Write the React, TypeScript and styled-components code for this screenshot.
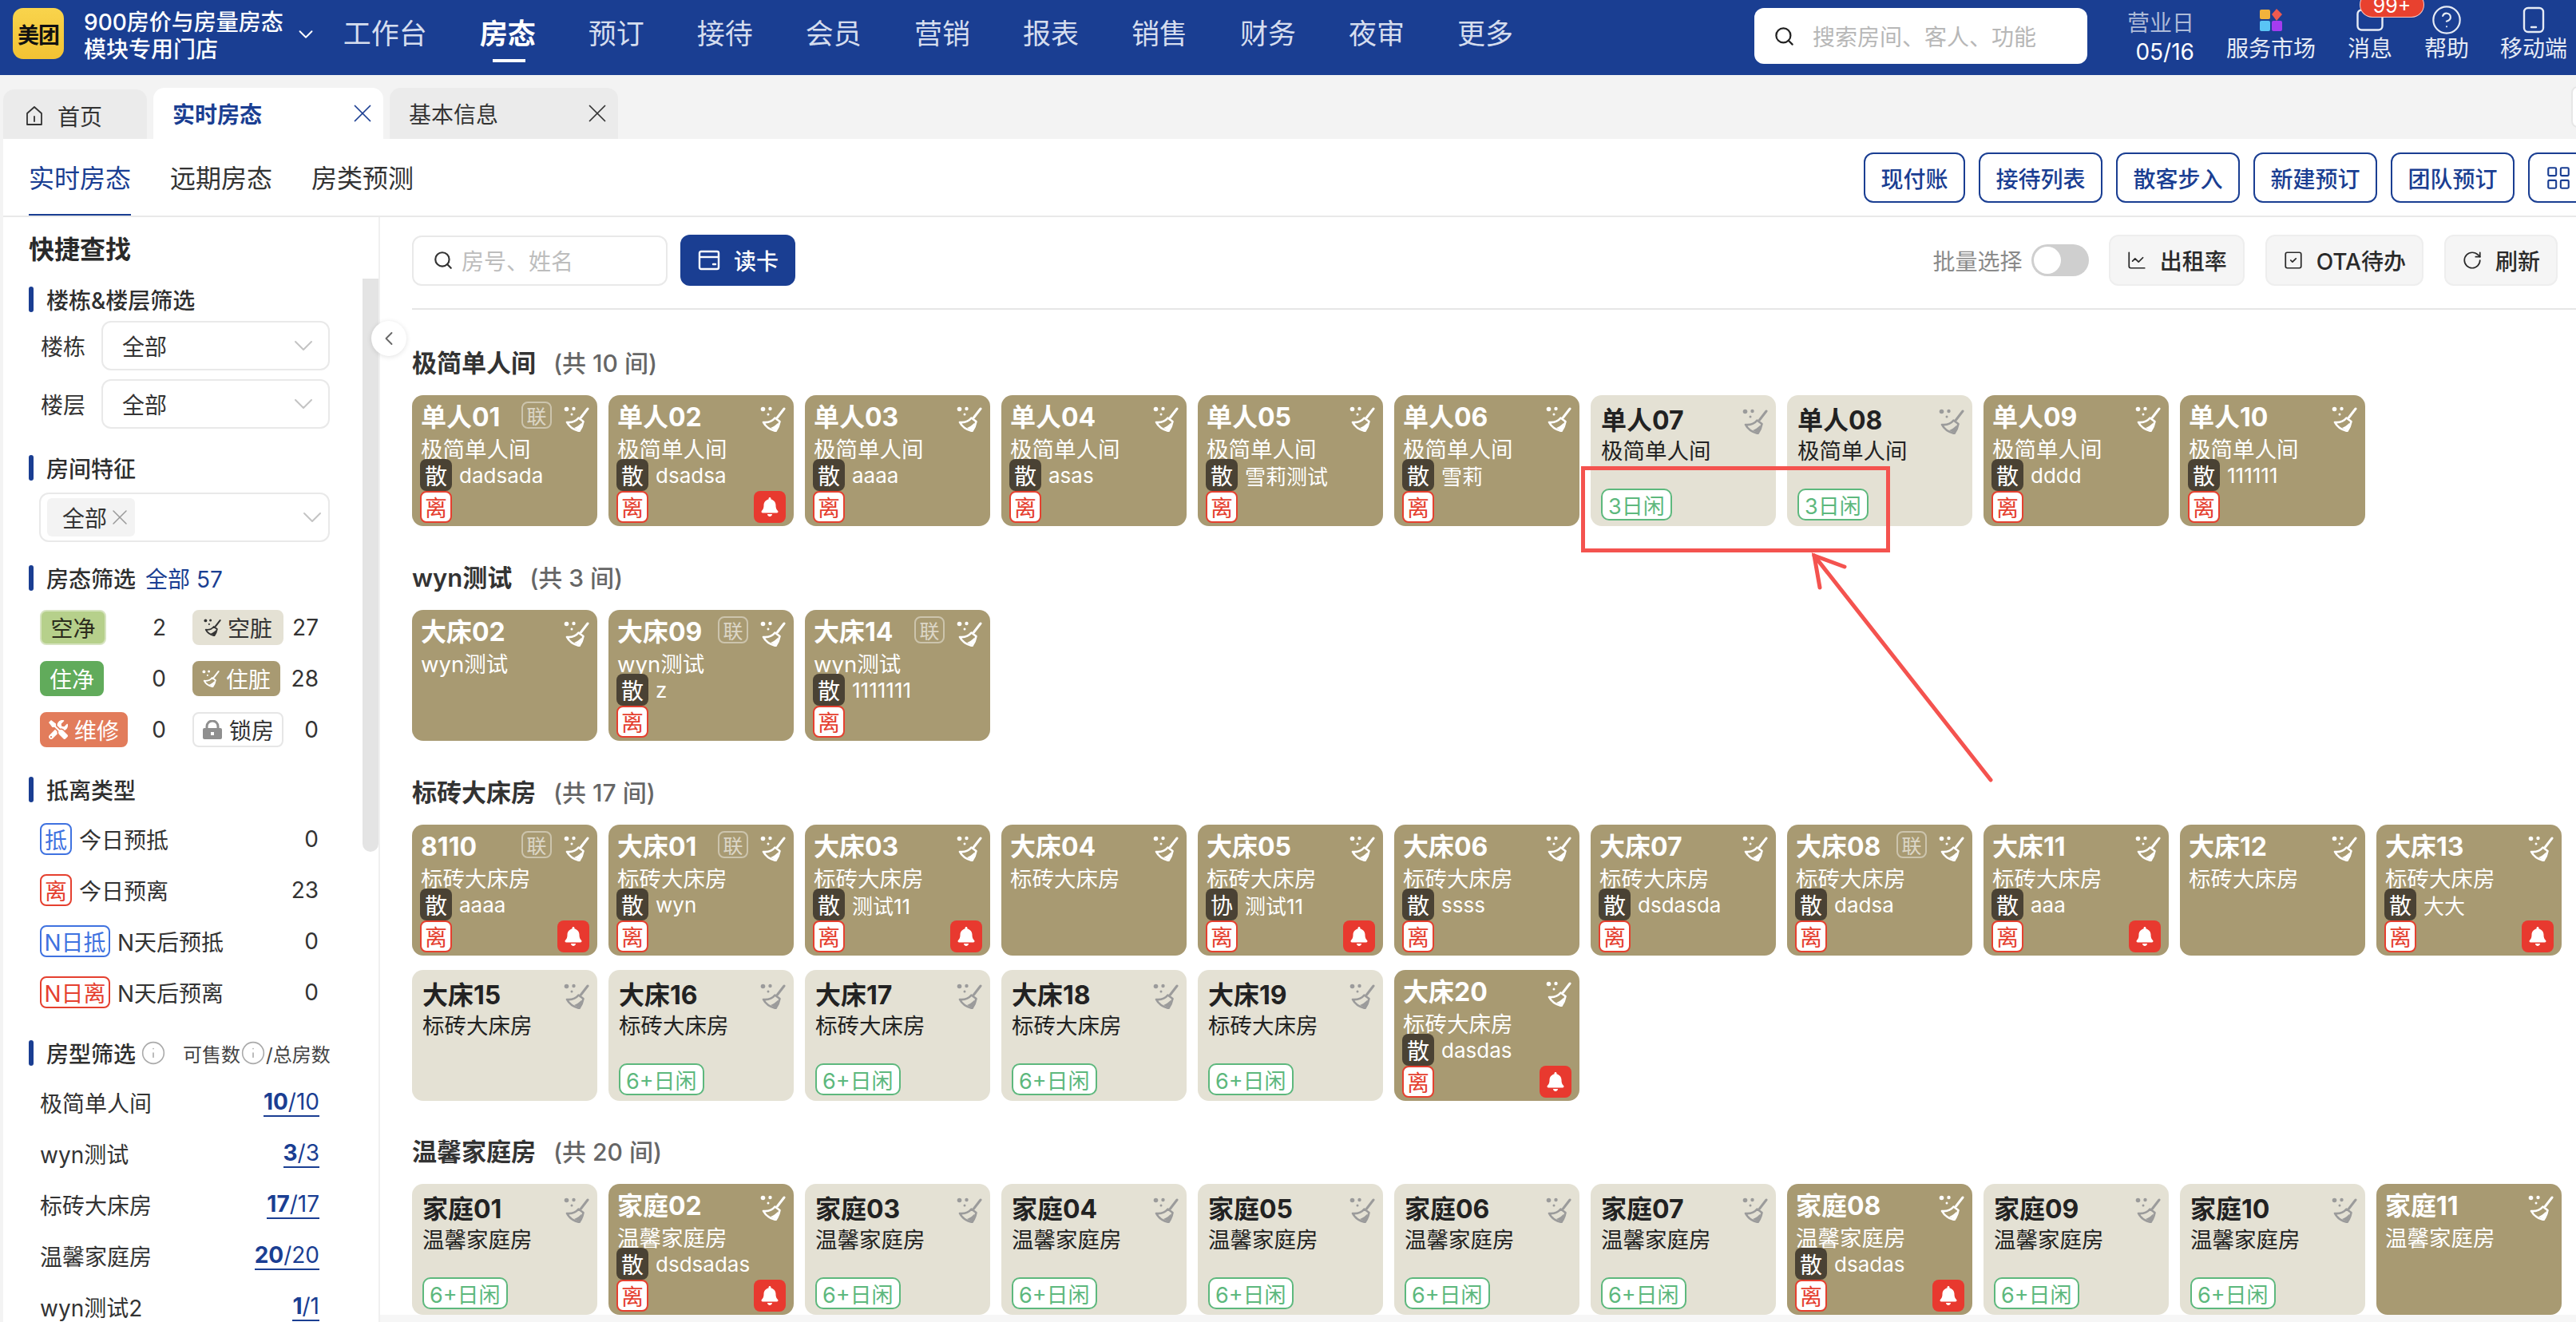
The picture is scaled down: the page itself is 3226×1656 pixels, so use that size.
import React from "react";
import styled, { createGlobalStyle } from "styled-components";
import { ChevronDown, ChevronLeft, X, Search, Info, CircleHelp, ChartLine, SquareCheck, RotateCw, LayoutGrid } from "lucide-react";
import { FaBell, FaTools } from "react-icons/fa";

const GlobalStyle = createGlobalStyle`
  html, body { margin: 0; padding: 0; }
  body {
    background: #f3f3f3;
    font-family: Inter, "Noto Sans CJK SC", sans-serif;
    color: #333;
  }
  * { box-sizing: border-box; }
`;

const BLUE = "#1a3e92";
const TAN = "#a89a72";
const CREAM = "#e4e1d4";

const Page = styled.div`
  position: relative;
  width: 3226px;
  height: 1656px;
  overflow: hidden;
  background: #f3f3f3;
`;

/* ---------- top bar ---------- */
const TopBar = styled.header`
  display: flex;
  align-items: center;
  height: 94px;
  padding: 0 11px 0 16px;
  background: ${BLUE};
  color: #fff;
`;

const Logo = styled.div`
  display: flex;
  align-items: center;
  justify-content: center;
  width: 64px;
  height: 64px;
  margin-top: -10px;
  border-radius: 13px;
  background: linear-gradient(180deg, #f9d44c, #f2c233);
  color: #111;
  font-size: 27px;
  font-weight: 700;
  letter-spacing: -1px;
`;

const StoreName = styled.div`
  margin: -4px 0 0 25px;
  font-size: 28px;
  font-weight: 500;
  line-height: 34px;
  white-space: nowrap;
`;

const StoreArrow = styled(ChevronDown)`
  margin: -8px 0 0 13px;
  flex: none;
`;

const Nav = styled.nav`
  display: flex;
  gap: 66px;
  margin: -10px 0 0 32px;
`;

const NavItem = styled.a<{ $active?: boolean }>`
  position: relative;
  font-size: 35px;
  line-height: 48px;
  white-space: nowrap;
  font-weight: ${(p) => (p.$active ? 700 : 400)};
  color: ${(p) => (p.$active ? "#fff" : "#d5ddee")};

  ${(p) =>
    p.$active &&
    `&::after {
      content: "";
      position: absolute;
      left: 16px;
      bottom: -12px;
      width: 41px;
      height: 4px;
      background: #fff;
    }`}
`;

const TopSearch = styled.div`
  display: flex;
  align-items: center;
  gap: 22px;
  width: 417px;
  height: 70px;
  margin: -4px 0 0 auto;
  padding-left: 24px;
  border-radius: 12px;
  background: #fff;
  color: #b7b7b7;
  font-size: 28px;
  white-space: nowrap;

  svg { color: #222; flex: none; }
`;

const BizDay = styled.div`
  display: flex;
  flex-direction: column;
  align-items: flex-end;
  width: 84px;
  margin-left: 50px;
  font-size: 28px;
  line-height: 36px;
  white-space: nowrap;
`;

const BizLabel = styled.span`
  color: #aebbd8;
`;

const TopAction = styled.div<{ $gap: number }>`
  position: relative;
  display: flex;
  flex-direction: column;
  align-items: center;
  height: 94px;
  margin-left: ${(p) => p.$gap}px;
  padding-top: 8px;
  font-size: 28px;
  line-height: 36px;
  color: #e6ebf5;
  white-space: nowrap;
`;

const TopIcon = styled.div`
  display: flex;
  align-items: center;
  justify-content: center;
  height: 34px;
  margin-bottom: 1px;
`;

const Badge99 = styled.span`
  position: absolute;
  top: -10px;
  left: 15px;
  width: 81px;
  height: 32px;
  border: 1px solid rgba(255, 255, 255, 0.7);
  border-radius: 16px;
  background: #e8412f;
  color: #fff;
  font-size: 25px;
  line-height: 32px;
  text-align: center;
`;

/* ---------- tab bar ---------- */
const TabBar = styled.div`
  display: flex;
  align-items: flex-end;
  gap: 8px;
  height: 80px;
  padding-left: 4px;
`;

const Tab = styled.div<{ $active?: boolean; $width: number }>`
  display: flex;
  align-items: center;
  width: ${(p) => p.$width}px;
  height: 64px;
  padding: 0 7px 0 24px;
  border-radius: 14px 14px 0 0;
  background: ${(p) => (p.$active ? "#fff" : "#ebebeb")};
  color: ${(p) => (p.$active ? BLUE : "#333")};
  font-size: 28px;
  font-weight: ${(p) => (p.$active ? 600 : 400)};

  svg.close { margin-left: auto; }
`;

const HomeTab = styled(Tab)`
  height: 62px;
  gap: 18px;
  padding: 4px 0 0 28px;
`;

const TabStub = styled.div`
  align-self: center;
  width: 20px;
  height: 52px;
  margin-left: auto;
  margin-right: -14px;
  border: 2px solid #e6e6e6;
  border-radius: 8px;
  background: #fff;
`;

/* ---------- panel ---------- */
const Panel = styled.div`
  margin-left: 4px;
  height: 1482px;
  background: #fff;
`;

const SubNav = styled.div`
  display: flex;
  align-items: flex-start;
  height: 98px;
  padding-left: 32px;
  border-bottom: 2px solid #e9e9e9;
  overflow: hidden;
`;

const SubTabs = styled.div`
  display: flex;
  gap: 49px;
`;

const SubTab = styled.div<{ $active?: boolean }>`
  position: relative;
  height: 96px;
  font-size: 32px;
  line-height: 100px;
  color: ${(p) => (p.$active ? BLUE : "#333")};
  white-space: nowrap;

  ${(p) =>
    p.$active &&
    `&::after {
      content: "";
      position: absolute;
      left: 0;
      right: 0;
      bottom: -2px;
      height: 4px;
      background: ${BLUE};
    }`}
`;

const SubActions = styled.div`
  display: flex;
  gap: 17px;
  margin: 17px -60px 0 auto;
`;

const OutlineButton = styled.button`
  display: flex;
  align-items: center;
  justify-content: center;
  height: 63px;
  padding: 0 19.5px;
  border: 2px solid ${BLUE};
  border-radius: 12px;
  background: #fff;
  color: ${BLUE};
  font: 500 28px Inter, "Noto Sans CJK SC", sans-serif;
  white-space: nowrap;
`;

const GridButton = styled(OutlineButton)`
  justify-content: flex-start;
  width: 120px;
  padding-left: 19px;
`;

const Body = styled.div`
  display: flex;
  height: 1384px;
`;

/* ---------- sidebar ---------- */
const Sidebar = styled.aside`
  position: relative;
  flex: none;
  width: 472px;
  height: 100%;
  padding-left: 32px;
  border-right: 2px solid #f0f0f0;
  overflow: hidden;
`;

const ScrollThumb = styled.div`
  position: absolute;
  top: 77px;
  right: 0;
  width: 20px;
  height: 718px;
  border-radius: 0 0 10px 10px;
  background: #e4e4e4;
`;

const SideTitle = styled.h2`
  margin: 21px 0 0;
  font-size: 32px;
  font-weight: 600;
  line-height: 40px;
  color: #2a2a2a;
`;

const SectionTitle = styled.div<{ $top: number }>`
  position: relative;
  display: flex;
  align-items: center;
  height: 32px;
  margin-top: ${(p) => p.$top}px;
  padding-left: 22px;
  font-size: 28px;
  font-weight: 500;
  color: #2f2f2f;
  white-space: nowrap;

  &::before {
    content: "";
    position: absolute;
    left: 0;
    top: 0;
    width: 6px;
    height: 32px;
    border-radius: 3px;
    background: ${BLUE};
  }
`;

const SectionLink = styled.span`
  margin-left: 12px;
  color: ${BLUE};
  font-weight: 400;
`;

const SelectRow = styled.div<{ $top: number }>`
  display: flex;
  align-items: center;
  margin-top: ${(p) => p.$top}px;
  padding-left: 15px;
  font-size: 28px;
`;

const SelectLabel = styled.span`
  width: 76px;
  flex: none;
`;

const SelectBox = styled.div<{ $tags?: boolean }>`
  display: flex;
  align-items: center;
  width: ${(p) => (p.$tags ? 364 : 286)}px;
  height: 62px;
  margin-left: ${(p) => (p.$tags ? -2 : 0)}px;
  padding: ${(p) => (p.$tags ? "0 0 0 8px" : "0 11px 0 24px")};
  border: 2px solid #e9e9e9;
  border-radius: 12px;
  background: #fff;
  color: #333;

  > svg { margin-left: auto; color: #c4c4c4; }
`;

const SelectTag = styled.span`
  display: flex;
  align-items: center;
  height: 48px;
  padding: 0 3px 0 19px;
  border-radius: 6px;
  background: #f3f3f3;

  svg { color: #999; }
`;

const StatusGrid = styled.div`
  display: grid;
  grid-template-columns: 158px 158px;
  column-gap: 33px;
  row-gap: 20px;
  margin: 24px 0 0 14px;
`;

const StatusCell = styled.div`
  display: flex;
  align-items: center;
  justify-content: space-between;
  font-size: 28px;
  color: #333;
`;

const StatusTag = styled.span<{ $bg: string; $fg: string; $border?: string; $width: number }>`
  display: flex;
  align-items: center;
  justify-content: center;
  gap: 8px;
  width: ${(p) => p.$width}px;
  height: 44px;
  border-radius: 8px;
  border: 2px solid ${(p) => p.$border ?? p.$bg};
  background: ${(p) => p.$bg};
  color: ${(p) => p.$fg};
  white-space: nowrap;
`;

const ArrivalList = styled.div`
  display: flex;
  flex-direction: column;
  gap: 24px;
  margin: 26px 0 0 14px;
  width: 349px;
`;

const ArrivalRow = styled.div`
  display: flex;
  align-items: center;
  height: 40px;
  font-size: 28px;
  white-space: nowrap;
`;

const ArrivalTag = styled.span<{ $color: string; $wide?: boolean }>`
  flex: none;
  display: flex;
  align-items: center;
  justify-content: center;
  width: ${(p) => (p.$wide ? 88 : 40)}px;
  height: 40px;
  margin-right: 9px;
  border: 2px solid ${(p) => p.$color};
  border-radius: 8px;
  background: #fff;
  color: ${(p) => p.$color};
`;

const RowValue = styled.span`
  margin-left: auto;
`;

const SmallHint = styled.span`
  display: flex;
  align-items: center;
  margin-left: 21px;
  font-size: 24px;
  font-weight: 400;
  color: #444;

  svg { color: #aaa; flex: none; }
`;

const TitleInfo = styled(Info)`
  margin-left: 6px;
  color: #aaa;
  flex: none;
`;

const TypeList = styled.div`
  display: flex;
  flex-direction: column;
  gap: 24px;
  margin: 26px 0 0 14px;
  width: 350px;
`;

const TypeRow = styled.div`
  display: flex;
  align-items: center;
  justify-content: space-between;
  height: 40px;
  font-size: 28px;
`;

const TypeCount = styled.a`
  border-bottom: 2px solid ${BLUE};
  color: ${BLUE};
  line-height: 33px;

  b { font-weight: 700; }
`;

const CollapseHandle = styled.div`
  position: absolute;
  left: 465px;
  top: 402px;
  display: flex;
  align-items: center;
  justify-content: center;
  width: 44px;
  height: 44px;
  border-radius: 50%;
  background: #fff;
  box-shadow: 0 1px 6px rgba(0, 0, 0, 0.12);
  color: #666;
`;

/* ---------- main ---------- */
const Main = styled.main`
  flex: 1;
  min-width: 0;
  padding-left: 40px;
  overflow: hidden;
  background: linear-gradient(#fff calc(100% - 9px), #f6f6f6 calc(100% - 9px));
`;

const Toolbar = styled.div`
  display: flex;
  align-items: center;
  height: 116px;
  padding: 22px 23px 28px 0;
  border-bottom: 2px solid #e6e6e6;
`;

const RoomSearch = styled.div`
  display: flex;
  align-items: center;
  gap: 10px;
  width: 320px;
  height: 63px;
  padding-left: 24px;
  border: 2px solid #e9e9e9;
  border-radius: 12px;
  color: #bdbdbd;
  font-size: 28px;

  svg { color: #333; flex: none; }
`;

const ReadCard = styled.button`
  display: flex;
  align-items: center;
  gap: 17px;
  width: 144px;
  height: 64px;
  margin-left: 16px;
  padding-left: 22px;
  border: 0;
  border-radius: 12px;
  background: ${BLUE};
  color: #fff;
  font: 500 28px Inter, "Noto Sans CJK SC", sans-serif;
`;

const BatchLabel = styled.span`
  margin-left: auto;
  color: #8a8a8a;
  font-size: 28px;
`;

const Toggle = styled.span`
  position: relative;
  width: 72px;
  height: 40px;
  margin: 0 25px 0 11px;
  border-radius: 20px;
  background: #cfcfcf;

  &::after {
    content: "";
    position: absolute;
    left: 3px;
    top: 3px;
    width: 34px;
    height: 34px;
    border-radius: 50%;
    background: #fff;
  }
`;

const ToolButton = styled.button`
  display: flex;
  align-items: center;
  gap: 16px;
  height: 64px;
  margin-right: 26px;
  padding: 0 20px;
  border: 2px solid #eee;
  border-radius: 12px;
  background: #f5f5f5;
  color: #2a2a2a;
  font: 500 28px Inter, "Noto Sans CJK SC", sans-serif;
  white-space: nowrap;

  &:last-child { margin-right: 0; }
`;

const Group = styled.section<{ $top: number }>`
  margin-top: ${(p) => p.$top}px;
`;

const GroupTitle = styled.h3`
  display: flex;
  gap: 22px;
  margin: 0 0 20px;
  font-size: 31px;
  font-weight: 600;
  line-height: 40px;
  color: #333;
  white-space: nowrap;
`;

const GroupCount = styled.span`
  font-weight: 500;
  font-size: 30px;
  color: #666;
`;

const RoomGrid = styled.div`
  display: grid;
  grid-template-columns: repeat(11, 232px);
  column-gap: 14px;
  row-gap: 18px;
`;

const Card = styled.div<{ $dirty?: boolean }>`
  display: flex;
  flex-direction: column;
  height: 164px;
  padding: ${(p) => (p.$dirty ? "8px 10px 4px" : "12px 10px 7px 13px")};
  border-radius: 14px;
  background: ${(p) => (p.$dirty ? TAN : CREAM)};
  color: ${(p) => (p.$dirty ? "#fff" : "#222")};
`;

const CardHead = styled.div`
  display: flex;
  align-items: flex-start;
  height: 40px;
`;

const CardName = styled.div<{ $dirty?: boolean }>`
  margin-left: ${(p) => (p.$dirty ? 1 : 0)}px;
  font-size: 32px;
  font-weight: 700;
  line-height: 40px;
  white-space: nowrap;
`;

const LinkMark = styled.span`
  flex: none;
  display: flex;
  align-items: center;
  justify-content: center;
  width: 38px;
  height: 34px;
  margin-left: auto;
  border: 2px solid rgba(255, 255, 255, 0.42);
  border-radius: 8px;
  color: rgba(255, 255, 255, 0.62);
  font-size: 25px;
`;

const BroomWrap = styled.span<{ $dirty?: boolean; $pushed?: boolean }>`
  flex: none;
  display: flex;
  margin-top: ${(p) => (p.$dirty ? 6 : 5)}px;
  margin-left: ${(p) => (p.$pushed ? "15px" : "auto")};
  color: ${(p) => (p.$dirty ? "#fff" : "#9b9b9b")};
`;

const CardType = styled.div<{ $dirty?: boolean }>`
  margin-top: ${(p) => (p.$dirty ? 4 : 2)}px;
  margin-left: ${(p) => (p.$dirty ? 1 : 0)}px;
  font-size: 27.5px;
  line-height: 32px;
  white-space: nowrap;
`;

const GuestRow = styled.div`
  display: flex;
  align-items: center;
  gap: 9px;
  height: 40px;
  margin-top: -4px;
  font-size: 26px;
  white-space: nowrap;
`;

const GuestTag = styled.span`
  flex: none;
  display: flex;
  align-items: center;
  justify-content: center;
  width: 40px;
  height: 40px;
  border-radius: 8px;
  background: #4a4234;
  color: #fff;
  font-size: 28px;
`;

const CardFoot = styled.div`
  display: flex;
  align-items: center;
  justify-content: space-between;
  height: 40px;
  margin-top: auto;
`;

const LeaveTag = styled.span`
  display: flex;
  align-items: center;
  justify-content: center;
  width: 40px;
  height: 40px;
  border: 2px solid #e5402f;
  border-radius: 8px;
  background: #fff;
  color: #e5402f;
  font-size: 28px;
`;

const BellTag = styled.span`
  display: flex;
  align-items: center;
  justify-content: center;
  width: 40px;
  height: 40px;
  border-radius: 8px;
  background: #e8392f;
  color: #fff;
`;

const IdleTag = styled.span`
  display: flex;
  align-items: center;
  justify-content: center;
  height: 40px;
  padding: 0 7px;
  border: 2px solid #5db87d;
  border-radius: 10px;
  background: #fff;
  color: #5db87d;
  font-size: 27px;
  white-space: nowrap;
`;

/* ---------- red annotation drawn on the screenshot ---------- */
const MarkBox = styled.div`
  position: absolute;
  left: 1980px;
  top: 584px;
  width: 387px;
  height: 108px;
  border: 5px solid #f4534f;
`;

const MarkArrow = styled.svg`
  position: absolute;
  left: 2260px;
  top: 690px;
`;

/* ---------- drawings ---------- */
const Broom = ({ size = 32 }: { size?: number }) => (
  <svg width={size} height={size} viewBox="0 0 32 32" fill="none">
    <circle cx="3.5" cy="3.5" r="2.8" fill="currentColor" />
    <circle cx="12.500" cy="3" r="2.200" fill="currentColor" />
    <circle cx="10" cy="10" r="1.500" fill="currentColor" />
    <path d="M30 3 21.500 14" stroke="currentColor" strokeWidth="3" strokeLinecap="round" />
    <path
      d="M4 20c5 .5 11-1 14.500-5.500l6 4.500c-.8 4.500-2.500 8.500-5 12C13 29.500 7 26 4 20Z"
      stroke="currentColor"
      strokeWidth="2.600"
      strokeLinejoin="round"
    />
    <path d="M13 27c3-1 6-3 9-6l.8.6c-.6 2.800-1.500 5.400-3.400 8.400-2.300-.6-4.400-1.600-6.400-3Z" fill="currentColor" />
  </svg>
);

const HomeIcon = () => (
  <svg width="22" height="26" viewBox="0 0 22 26" fill="none" stroke="#333" strokeWidth="1.800" strokeLinejoin="round">
    <path d="M2 10 11 2l9 8v14H2Z" />
    <path d="M11 14v6" strokeLinecap="round" />
  </svg>
);

const CardIcon = () => (
  <svg width="28" height="28" viewBox="0 0 28 28" fill="none" stroke="#fff" strokeWidth="2.400">
    <rect x="2" y="3" width="24" height="22" rx="2" />
    <path d="M2 10h24" />
    <path d="M19 19h3" strokeLinecap="round" />
  </svg>
);

const MarketIcon = () => (
  <svg width="30" height="30" viewBox="0 0 30 30">
    <rect x="1" y="2" width="13" height="12" rx="2" fill="#f2b33c" />
    <path d="M22 1l7 7-7 8-6-8Z" fill="#ee5a4f" />
    <rect x="1" y="16" width="13" height="13" rx="2" fill="#5ac4f5" />
    <rect x="16" y="16" width="13" height="13" rx="2" fill="#a43cf0" />
  </svg>
);

const MailIcon = () => (
  <svg width="34" height="28" viewBox="0 0 34 28" fill="none" stroke="#e6ebf5" strokeWidth="2.400">
    <rect x="1.500" y="1.500" width="31" height="25" rx="5" />
  </svg>
);

const PhoneIcon = () => (
  <svg width="28" height="34" viewBox="0 0 28 34" fill="none" stroke="#e6ebf5" strokeWidth="2.400" strokeLinecap="round">
    <rect x="2" y="2" width="24" height="30" rx="5" />
    <path d="M11 26h6" />
  </svg>
);

const LockIcon = () => (
  <svg width="26" height="24" viewBox="0 0 26 24">
    <path d="M6 11V8a7 7 0 0 1 14 0v3" fill="none" stroke="#8f8f8f" strokeWidth="3" />
    <rect x="1" y="10" width="24" height="14" rx="2" fill="#8f8f8f" />
    <rect x="11" y="15" width="4" height="4" fill="#fff" />
  </svg>
);

/* ---------- data ---------- */
type Room = {
  name: string;
  link?: boolean;
  guest?: string;
  guestTag?: string;
  bell?: boolean;
  idle?: string;
  dirty?: boolean;
};

const d = (name: string, guest?: string, extra: Partial<Room> = {}): Room => ({ name, guest, dirty: true, ...extra });
const c = (name: string, idle?: string): Room => ({ name, idle });

const groups: { title: string; count: number; top: number; rooms: Room[] }[] = [
  {
    title: "极简单人间",
    count: 10,
    top: 47,
    rooms: [
      d("单人01", "dadsada", { link: true }),
      d("单人02", "dsadsa", { bell: true }),
      d("单人03", "aaaa"),
      d("单人04", "asas"),
      d("单人05", "雪莉测试"),
      d("单人06", "雪莉"),
      c("单人07", "3日闲"),
      c("单人08", "3日闲"),
      d("单人09", "dddd"),
      d("单人10", "111111"),
    ],
  },
  {
    title: "wyn测试",
    count: 3,
    top: 45,
    rooms: [d("大床02"), d("大床09", "z", { link: true }), d("大床14", "1111111", { link: true })],
  },
  {
    title: "标砖大床房",
    count: 17,
    top: 45,
    rooms: [
      d("8110", "aaaa", { link: true, bell: true }),
      d("大床01", "wyn", { link: true }),
      d("大床03", "测试11", { bell: true }),
      d("大床04"),
      d("大床05", "测试11", { guestTag: "协", bell: true }),
      d("大床06", "ssss"),
      d("大床07", "dsdasda"),
      d("大床08", "dadsa", { link: true }),
      d("大床11", "aaa", { bell: true }),
      d("大床12"),
      d("大床13", "大大", { bell: true }),
      c("大床15"),
      c("大床16", "6+日闲"),
      c("大床17", "6+日闲"),
      c("大床18", "6+日闲"),
      c("大床19", "6+日闲"),
      d("大床20", "dasdas", { bell: true }),
    ],
  },
  {
    title: "温馨家庭房",
    count: 20,
    top: 44,
    rooms: [
      c("家庭01", "6+日闲"),
      d("家庭02", "dsdsadas", { bell: true }),
      c("家庭03", "6+日闲"),
      c("家庭04", "6+日闲"),
      c("家庭05", "6+日闲"),
      c("家庭06", "6+日闲"),
      c("家庭07", "6+日闲"),
      d("家庭08", "dsadas", { bell: true }),
      c("家庭09", "6+日闲"),
      c("家庭10", "6+日闲"),
      d("家庭11"),
    ],
  },
];

const navItems = ["工作台", "房态", "预订", "接待", "会员", "营销", "报表", "销售", "财务", "夜审", "更多"];
const actions = ["现付账", "接待列表", "散客步入", "新建预订", "团队预订"];
const roomTypes = [
  ["极简单人间", "10", "10"],
  ["wyn测试", "3", "3"],
  ["标砖大床房", "17", "17"],
  ["温馨家庭房", "20", "20"],
  ["wyn测试2", "1", "1"],
];
const arrivals = [
  { tag: "抵", color: "#3f72e0", label: "今日预抵", value: 0 },
  { tag: "离", color: "#e5402f", label: "今日预离", value: 23 },
  { tag: "N日抵", color: "#3f72e0", label: "N天后预抵", value: 0, wide: true },
  { tag: "N日离", color: "#e5402f", label: "N天后预离", value: 0, wide: true },
];

const RoomCard = ({ room, type }: { room: Room; type: string }) => (
  <Card $dirty={room.dirty}>
    <CardHead>
      <CardName $dirty={room.dirty}>{room.name}</CardName>
      {room.link && <LinkMark>联</LinkMark>}
      <BroomWrap $dirty={room.dirty} $pushed={room.link}>
        <Broom />
      </BroomWrap>
    </CardHead>
    <CardType $dirty={room.dirty}>{type}</CardType>
    {room.guest && (
      <GuestRow>
        <GuestTag>{room.guestTag ?? "散"}</GuestTag>
        {room.guest}
      </GuestRow>
    )}
    {room.guest && (
      <CardFoot>
        <LeaveTag>离</LeaveTag>
        {room.bell && (
          <BellTag>
            <FaBell size={24} />
          </BellTag>
        )}
      </CardFoot>
    )}
    {room.idle && (
      <CardFoot>
        <IdleTag>{room.idle}</IdleTag>
      </CardFoot>
    )}
  </Card>
);

export default function App() {
  return (
    <Page>
      <GlobalStyle />
      <TopBar>
        <Logo>美团</Logo>
        <StoreName>
          900房价与房量房态
          <br />
          模块专用门店
        </StoreName>
        <StoreArrow size={30} strokeWidth={1.5} />
        <Nav>
          {navItems.map((item) => (
            <NavItem key={item} $active={item === "房态"}>
              {item}
            </NavItem>
          ))}
        </Nav>
        <TopSearch>
          <Search size={27} />
          搜索房间、客人、功能
        </TopSearch>
        <BizDay>
          <BizLabel>营业日</BizLabel>
          05/16
        </BizDay>
        <TopAction $gap={40}>
          <TopIcon>
            <MarketIcon />
          </TopIcon>
          服务市场
        </TopAction>
        <TopAction $gap={40}>
          <TopIcon>
            <MailIcon />
          </TopIcon>
          消息
          <Badge99>99+</Badge99>
        </TopAction>
        <TopAction $gap={40}>
          <TopIcon>
            <CircleHelp size={40} strokeWidth={1.3} />
          </TopIcon>
          帮助
        </TopAction>
        <TopAction $gap={39}>
          <TopIcon>
            <PhoneIcon />
          </TopIcon>
          移动端
        </TopAction>
      </TopBar>

      <TabBar>
        <HomeTab $width={180}>
          <HomeIcon />
          首页
        </HomeTab>
        <Tab $active $width={288}>
          实时房态
          <X className="close" size={38} strokeWidth={1.1} />
        </Tab>
        <Tab $width={286}>
          基本信息
          <X className="close" size={38} strokeWidth={1.1} />
        </Tab>
        <TabStub />
      </TabBar>

      <Panel>
        <SubNav>
          <SubTabs>
            <SubTab $active>实时房态</SubTab>
            <SubTab>远期房态</SubTab>
            <SubTab>房类预测</SubTab>
          </SubTabs>
          <SubActions>
            {actions.map((a) => (
              <OutlineButton key={a}>{a}</OutlineButton>
            ))}
            <GridButton>
              <LayoutGrid size={34} strokeWidth={1.5} />
            </GridButton>
          </SubActions>
        </SubNav>

        <Body>
          <Sidebar>
            <ScrollThumb />
            <SideTitle>快捷查找</SideTitle>

            <SectionTitle $top={26}>楼栋&amp;楼层筛选</SectionTitle>
            <SelectRow $top={11}>
              <SelectLabel>楼栋</SelectLabel>
              <SelectBox>
                全部
                <ChevronDown size={40} strokeWidth={1.2} />
              </SelectBox>
            </SelectRow>
            <SelectRow $top={11}>
              <SelectLabel>楼层</SelectLabel>
              <SelectBox>
                全部
                <ChevronDown size={40} strokeWidth={1.2} />
              </SelectBox>
            </SelectRow>

            <SectionTitle $top={33}>房间特征</SectionTitle>
            <SelectRow $top={15}>
              <SelectBox $tags>
                <SelectTag>
                  全部
                  <X size={32} strokeWidth={1.1} />
                </SelectTag>
                <ChevronDown size={40} strokeWidth={1.2} />
              </SelectBox>
            </SelectRow>

            <SectionTitle $top={29}>
              房态筛选
              <SectionLink>全部 57</SectionLink>
            </SectionTitle>
            <StatusGrid>
              <StatusCell>
                <StatusTag $bg="#b6d08b" $fg="#2b2b1c" $border="#d6e3bf" $width={83}>
                  空净
                </StatusTag>
                2
              </StatusCell>
              <StatusCell>
                <StatusTag $bg={CREAM} $fg="#333" $width={114}>
                  <Broom size={22} />
                  空脏
                </StatusTag>
                27
              </StatusCell>
              <StatusCell>
                <StatusTag $bg="#61ab5b" $fg="#fff" $width={80}>
                  住净
                </StatusTag>
                0
              </StatusCell>
              <StatusCell>
                <StatusTag $bg={TAN} $fg="#fff" $width={110}>
                  <Broom size={22} />
                  住脏
                </StatusTag>
                28
              </StatusCell>
              <StatusCell>
                <StatusTag $bg="#e27c5b" $fg="#fff" $width={110}>
                  <FaTools size={24} />
                  维修
                </StatusTag>
                0
              </StatusCell>
              <StatusCell>
                <StatusTag $bg="#fff" $fg="#333" $border="#e6e6e6" $width={114}>
                  <LockIcon />
                  锁房
                </StatusTag>
                0
              </StatusCell>
            </StatusGrid>

            <SectionTitle $top={37}>抵离类型</SectionTitle>
            <ArrivalList>
              {arrivals.map((row) => (
                <ArrivalRow key={row.label}>
                  <ArrivalTag $color={row.color} $wide={row.wide}>
                    {row.tag}
                  </ArrivalTag>
                  {row.label}
                  <RowValue>{row.value}</RowValue>
                </ArrivalRow>
              ))}
            </ArrivalList>

            <SectionTitle $top={40}>
              房型筛选
              <TitleInfo size={32} strokeWidth={1.2} />
              <SmallHint>
                可售数
                <Info size={32} strokeWidth={1.2} />
                /总房数
              </SmallHint>
            </SectionTitle>
            <TypeList>
              {roomTypes.map(([name, sale, total]) => (
                <TypeRow key={name}>
                  {name}
                  <TypeCount>
                    <b>{sale}</b>/{total}
                  </TypeCount>
                </TypeRow>
              ))}
            </TypeList>
          </Sidebar>

          <Main>
            <Toolbar>
              <RoomSearch>
                <Search size={26} />
                房号、姓名
              </RoomSearch>
              <ReadCard>
                <CardIcon />
                读卡
              </ReadCard>
              <BatchLabel>批量选择</BatchLabel>
              <Toggle />
              <ToolButton>
                <ChartLine size={26} strokeWidth={1.6} />
                出租率
              </ToolButton>
              <ToolButton>
                <SquareCheck size={26} strokeWidth={1.6} />
                OTA待办
              </ToolButton>
              <ToolButton>
                <RotateCw size={26} strokeWidth={1.6} />
                刷新
              </ToolButton>
            </Toolbar>

            {groups.map((g) => (
              <Group key={g.title} $top={g.top}>
                <GroupTitle>
                  {g.title}
                  <GroupCount>(共 {g.count} 间)</GroupCount>
                </GroupTitle>
                <RoomGrid>
                  {g.rooms.map((room) => (
                    <RoomCard key={room.name} room={room} type={g.title} />
                  ))}
                </RoomGrid>
              </Group>
            ))}
          </Main>
        </Body>
      </Panel>

      <CollapseHandle>
        <ChevronLeft size={28} strokeWidth={1.6} />
      </CollapseHandle>

      <MarkBox />
      <MarkArrow width="240" height="295" viewBox="0 0 240 295" fill="none" stroke="#f4534f" strokeWidth="5" strokeLinecap="round">
        <path d="M233 287 12 6" />
        <path d="M50 20 12 6l7 40" />
      </MarkArrow>
    </Page>
  );
}
